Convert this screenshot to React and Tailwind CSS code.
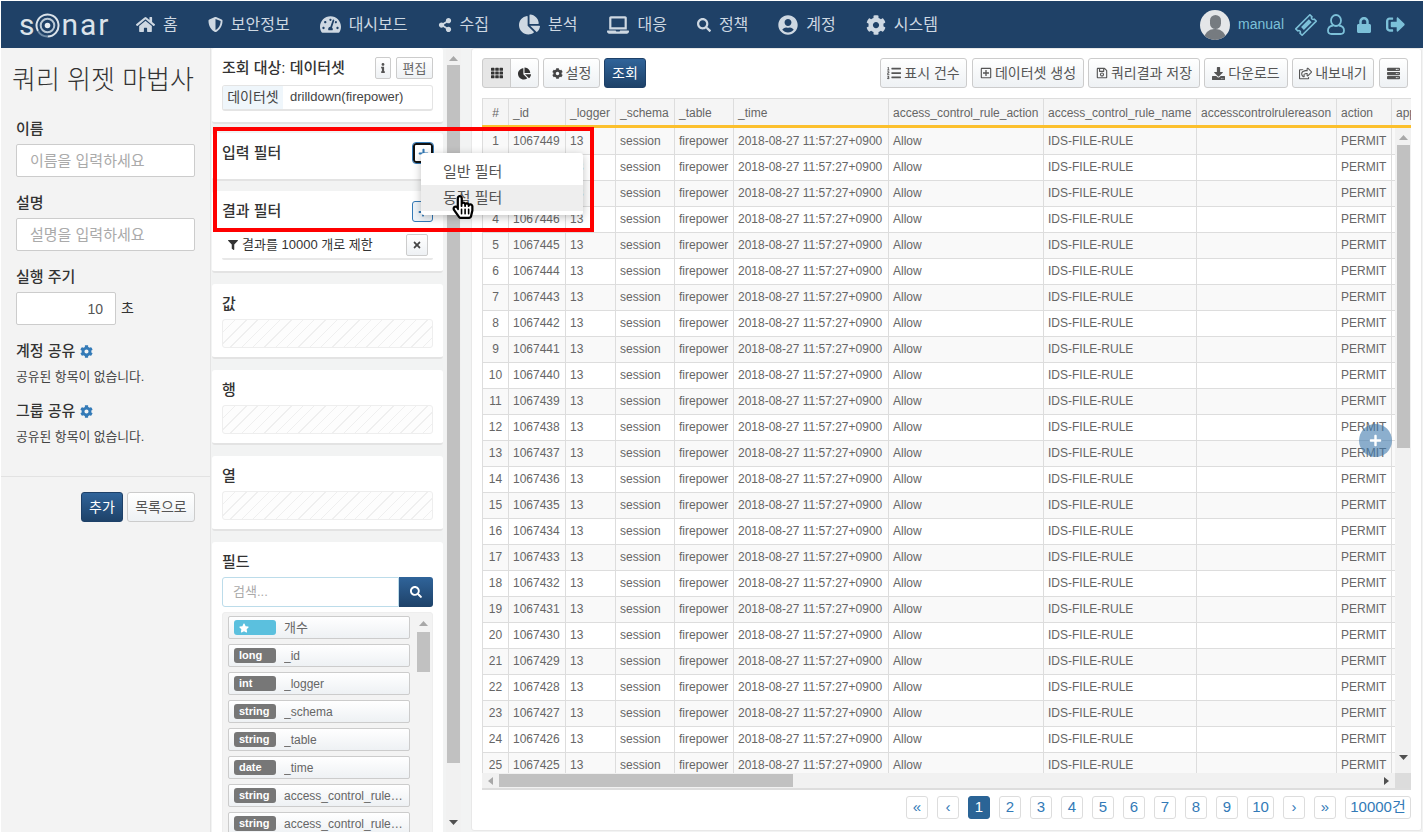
import React from "react";
import {
	FaHome, FaShieldAlt, FaTachometerAlt, FaShareAlt, FaChartPie, FaLaptop, FaSearch, FaUserCircle, FaCog,
	FaInfo, FaTimes, FaFilter, FaStar, FaTh, FaDownload, FaRegShareSquare, FaRegSave, FaRegPlusSquare,
	FaListOl, FaLock, FaSignOutAlt, FaPlus, FaServer, FaHandPointer, FaRegHandPointer,
} from "react-icons/fa";

const navItems = [
	{ label: "홈", icon: FaHome, size: 19 },
	{ label: "보안정보", icon: FaShieldAlt, size: 15 },
	{ label: "대시보드", icon: FaTachometerAlt, size: 21 },
	{ label: "수집", icon: FaShareAlt, size: 14 },
	{ label: "분석", icon: FaChartPie, size: 21 },
	{ label: "대응", icon: FaLaptop, size: 22 },
	{ label: "정책", icon: FaSearch, size: 14 },
	{ label: "계정", icon: FaUserCircle, size: 20 },
	{ label: "시스템", icon: FaCog, size: 20 },
];

const fields = [
	["long", "_id"],
	["int", "_logger"],
	["string", "_schema"],
	["string", "_table"],
	["date", "_time"],
	["string", "access_control_rule_action"],
	["string", "access_control_rule_name"],
];

const columns = ["#", "_id", "_logger", "_schema", "_table", "_time", "access_control_rule_action", "access_control_rule_name", "accesscontrolrulereason", "action", "app"];

const rows = Array.from({ length: 25 }, (_, i) => i + 1);

const Cols = () => (
	<colgroup>
		<col className="w-[26px]" />
		<col className="w-[57px]" />
		<col className="w-[50px]" />
		<col className="w-[59px]" />
		<col className="w-[59px]" />
		<col className="w-[155px]" />
		<col className="w-[155px]" />
		<col className="w-[153px]" />
		<col className="w-[140px]" />
		<col className="w-[55px]" />
		<col className="w-[80px]" />
	</colgroup>
);

const Btn = ({ children, className = "" }) => (
	<button className={"flex h-[30px] items-center justify-center gap-[3px] rounded-[3px] border border-[#ccc] bg-gradient-to-b from-white to-[#eef1f4] text-[14px] text-[#555] " + className}>
		{children}
	</button>
);

const Primary = ({ children, className = "" }) => (
	<button className={"flex h-[30px] items-center justify-center rounded-[3px] border border-[#1d4068] bg-gradient-to-b from-[#30649a] to-[#1e4269] text-[14px] text-white " + className}>
		{children}
	</button>
);

const Card = ({ children, className = "" }) => (
	<div className={"w-[231px] shrink-0 rounded-[3px] border-b-2 border-[#e3e3e3] bg-white px-[10px] " + className}>{children}</div>
);

const DropZone = ({ title }) => (
	<Card className="mb-[11px] h-[75px] pt-[10px]">
		<div className="text-[15px] leading-[20px] font-medium text-[#333]">{title}</div>
		<div className="mt-[5px] h-[29px] rounded-[3px] border border-[#eee] bg-[repeating-linear-gradient(135deg,#efefef_0,#efefef_1px,#fdfdfd_1px,#fdfdfd_8px)]" />
	</Card>
);

const Up = () => (
	<svg width="9" height="5" viewBox="0 0 9 5"><polygon points="4.5,0 9,5 0,5" fill="#a8a8a8" /></svg>
);
const Down = () => (
	<svg width="9" height="5" viewBox="0 0 9 5"><polygon points="0,0 9,0 4.5,5" fill="#505050" /></svg>
);

const PageBtn = ({ children, active, className = "w-[22px]" }) => (
	<button className={"flex h-[23px] items-center justify-center rounded-[3px] border text-[15px] " + (active ? "border-[#2a6496] bg-[#2a6496] text-white " : "border-[#ddd] bg-white text-[#337ab7] ") + className}>
		{children}
	</button>
);

const Field = ({ badge, name, star }) => (
	<div className="mb-[5px] flex h-[23px] w-[182px] shrink-0 items-center rounded-[2px] border border-[#ccc] bg-gradient-to-b from-white to-[#eef1f4] pl-[5px]">
		<span className={"flex h-[15px] w-[42px] shrink-0 items-center rounded-[3px] pl-[5px] text-[11px] font-bold text-white " + (star ? "bg-[#5bc0de]" : "bg-[#777]")}>
			{star ? <FaStar size={10} /> : badge}
		</span>
		<span className={"ml-[8px] truncate pr-[6px] text-[#666] " + (star ? "text-[13px]" : "text-[12px]")}>{name}</span>
	</div>
);

const App = () => {
	return (
		<div className="relative flex h-[832px] w-[1423px] flex-col overflow-hidden border-t border-l border-white bg-[#f2f3f3] font-['Liberation_Sans','Noto_Sans_CJK_KR',sans-serif]">
			{/* top bar */}
			<div className="flex h-[47px] shrink-0 items-center bg-[#1f4167] pr-[18px] pl-[16px]">
				<div className="flex w-[119px] items-center pl-[2px] font-['Roboto',sans-serif] text-[30px] leading-none font-normal tracking-[2px] text-[#dbe3ea]">
					<span className="tracking-normal">s</span>
					<svg width="25" height="25" viewBox="0 0 25 25" className="mt-[1px] mr-[1px] ml-[1px]">
						<path d="M3 18 A11 11 0 1 1 12.5 23.5" fill="none" stroke="#dbe3ea" strokeWidth="2" />
						<path d="M3 18 A11 11 0 0 0 12.5 23.5" fill="none" stroke="#6f8ba6" strokeWidth="2" />
						<circle cx="12.5" cy="12.5" r="6.8" fill="none" stroke="#b9c8d5" strokeWidth="2" />
						<circle cx="12.5" cy="12.5" r="2.8" fill="#e6edf2" />
					</svg>
					<span>nar</span>
				</div>
				<div className="flex items-center gap-[30px] text-[#ced8e2]">
					{navItems.map((n) => (
						<div key={n.label} className="flex items-center gap-[8px] text-[16px] leading-none">
							<n.icon size={n.size} />
							<span>{n.label}</span>
						</div>
					))}
				</div>
				<div className="ml-auto flex items-center text-[#7cc0d8]">
					<div className="relative flex h-[30px] w-[30px] items-center justify-center overflow-hidden rounded-full bg-[#e4e6e8]">
						<div className="absolute top-[5px] h-[14px] w-[11px] rounded-full bg-[#767b80]" />
						<div className="absolute top-[19px] h-[16px] w-[22px] rounded-t-[10px] bg-[#767b80]" />
					</div>
					<span className="ml-[8px] text-[14px]">manual</span>
					<svg width="22" height="22" viewBox="0 0 22 22" className="ml-[11px]">
						<g transform="rotate(-45 11 11)">
							<path d="M1 6.5 H21 V9.5 A1.5 1.5 0 0 0 21 12.5 V15.5 H1 V12.5 A1.5 1.5 0 0 0 1 9.5 Z" fill="none" stroke="currentColor" strokeWidth="1.6" strokeLinejoin="round" />
							<rect x="6" y="9" width="11" height="4" fill="currentColor" />
						</g>
					</svg>
					<svg width="18" height="21" viewBox="0 0 18 21" className="ml-[10px]" fill="none" stroke="currentColor" strokeWidth="1.8">
						<ellipse cx="9" cy="6.5" rx="5" ry="5.5" />
						<path d="M6 11.5 C2.5 12 1 14 1 16.5 C1 19 2.5 20 4.5 20 L13.5 20 C15.5 20 17 19 17 16.5 C17 14 15.5 12 12 11.5" />
					</svg>
					<FaLock size={16} className="ml-[11px]" />
					<FaSignOutAlt size={19} className="ml-[14px]" />
				</div>
			</div>

			<div className="flex min-h-0 flex-1">
				{/* left form */}
				<div className="flex w-[210px] shrink-0 flex-col border-r border-[#e4e4e4] bg-[#f3f3f3]">
					<div className="pt-[17px] pl-[11px] text-[26px] leading-[30px] font-light text-[#333]">쿼리 위젯 마법사</div>
					<div className="border-b border-[#e2e2e2] pr-[15px] pb-[30px] pl-[15px]">
						<div className="mt-[24px] text-[15px] leading-[20px] font-medium text-[#333]">이름</div>
						<input placeholder="이름을 입력하세요" className="mt-[5px] h-[33px] w-full rounded-[2px] border border-[#ccc] bg-white px-[13px] text-[15px] placeholder:text-[#aaa]" />
						<div className="mt-[16px] text-[15px] leading-[20px] font-medium text-[#333]">설명</div>
						<input placeholder="설명을 입력하세요" className="mt-[5px] h-[33px] w-full rounded-[2px] border border-[#ccc] bg-white px-[13px] text-[15px] placeholder:text-[#aaa]" />
						<div className="mt-[16px] text-[15px] leading-[20px] font-medium text-[#333]">실행 주기</div>
						<div className="mt-[5px] flex items-center">
							<input readOnly value="10" className="h-[33px] w-[100px] rounded-[2px] border border-[#ccc] bg-white px-[12px] text-right text-[14px] text-[#555]" />
							<span className="ml-[5px] text-[14px] text-[#333]">초</span>
						</div>
						<div className="mt-[16px] flex items-center gap-[5px] text-[15px] leading-[20px] font-medium text-[#333]">
							계정 공유 <FaCog size={13} className="text-[#337ab7]" />
						</div>
						<div className="mt-[7px] text-[12.8px] leading-[18px] text-[#444]">공유된 항목이 없습니다.</div>
						<div className="mt-[15px] flex items-center gap-[5px] text-[15px] leading-[20px] font-medium text-[#333]">
							그룹 공유 <FaCog size={13} className="text-[#337ab7]" />
						</div>
						<div className="mt-[7px] text-[12.8px] leading-[18px] text-[#444]">공유된 항목이 없습니다.</div>
					</div>
					<div className="flex justify-end gap-[4px] pt-[15px] pr-[15px]">
						<Primary className="w-[42px]">추가</Primary>
						<Btn className="w-[68px]">목록으로</Btn>
					</div>
				</div>

				{/* query config */}
				<div className="flex w-[250px] shrink-0">
					<div className="ml-[1px] flex w-[233px] flex-col overflow-hidden">
						<Card className="mb-[9px] h-[76px] pt-[9px]">
							<div className="flex items-center">
								<span className="text-[15px] font-medium text-[#333]">조회 대상: 데이터셋</span>
								<button className="ml-auto flex h-[22px] w-[16px] items-center justify-center rounded-[2px] border border-[#ccc] bg-gradient-to-b from-white to-[#eef1f4] text-[#555]"><FaInfo size={10} /></button>
								<button className="ml-[5px] flex h-[22px] w-[37px] items-center justify-center rounded-[2px] border border-[#ccc] bg-gradient-to-b from-white to-[#eef1f4] text-[13px] text-[#666]">편집</button>
							</div>
							<div className="mt-[5px] flex h-[26px] items-center overflow-hidden rounded-[3px] border border-b-2 border-[#e4e4e4] text-[13px] text-[#444]">
								<span className="flex h-full w-[60px] items-center justify-center bg-[#eff6fb] text-[14px]">데이터셋</span>
								<span className="ml-[7px]">drilldown(firepower)</span>
							</div>
						</Card>
						<Card className="mb-[10px] h-[48px] pt-[10px]">
							<div className="flex items-start justify-between">
								<span className="text-[15px] leading-[20px] font-medium text-[#333]">입력 필터</span>
								<button className="flex h-[20px] w-[20px] items-center justify-center rounded-[3px] border-2 border-[#111] text-[#337ab7] outline outline-[#337ab7]"><FaPlus size={11} /></button>
							</div>
						</Card>
						<Card className="mb-[11px] h-[82px] pt-[10px]">
							<div className="flex items-start justify-between">
								<span className="text-[15px] leading-[20px] font-medium text-[#333]">결과 필터</span>
								<button className="flex h-[21px] w-[21px] items-center justify-center rounded-[3px] border border-[#337ab7] bg-[#eef4f9] text-[#337ab7]"><FaPlus size={10} /></button>
							</div>
							<div className="mt-[9px] flex h-[29px] items-center rounded-[2px] border-b-2 border-[#e8e8e8] pr-[5px] pl-[6px] text-[13px] text-[#333]">
								<FaFilter size={10} />
								<span className="ml-[4px]">결과를 10000 개로 제한</span>
								<button className="ml-auto flex h-[22px] w-[22px] items-center justify-center rounded-[2px] border border-[#ccc] bg-gradient-to-b from-white to-[#eef1f4] text-[#444]"><FaTimes size={10} /></button>
							</div>
						</Card>
						<DropZone title="값" />
						<DropZone title="행" />
						<DropZone title="열" />
						<Card className="flex-1 pt-[10px]">
							<div className="text-[15px] leading-[20px] font-medium text-[#333]">필드</div>
							<div className="mt-[5px] flex h-[30px]">
								<input placeholder="검색..." className="min-w-0 flex-1 rounded-l-[3px] border border-[#bcdcea] bg-white px-[10px] text-[13px] placeholder:text-[#aaa]" />
								<button className="flex w-[34px] items-center justify-center rounded-r-[3px] bg-gradient-to-b from-[#30649a] to-[#1e4269] text-white"><FaSearch size={12} /></button>
							</div>
							<div className="mt-[5px] flex rounded-[3px] border border-[#eee] bg-[#f3f3f3] pt-[3px] pl-[5px]">
								<div className="flex w-[183px] flex-col">
									<Field star name="개수" />
									{fields.map(([b, n]) => <Field key={n} badge={b} name={n} />)}
								</div>
								<div className="ml-[6px] flex w-[13px] flex-col items-center">
									<div className="mt-[5px] flex h-[11px] items-start"><Up /></div>
									<div className="h-[40px] w-full bg-[#c1c1c1]" />
								</div>
							</div>
						</Card>
					</div>
					<div className="ml-[1px] flex w-[15px] shrink-0 flex-col items-center bg-[#f1f1f1]">
						<div className="flex h-[17px] items-center pt-[3px]"><Up /></div>
						<div className="h-[698px] w-[13px] bg-[#c1c1c1]" />
						<div className="mt-auto flex h-[19px] items-center"><Down /></div>
					</div>
				</div>

				{/* result panel */}
				<div className="mb-[1px] ml-[10px] flex w-[951px] shrink-0 flex-col rounded-[3px] border border-[#e8e8e8] bg-white px-[10px] pt-[9px]">
					<div className="flex h-[30px] items-center">
						<div className="flex">
							<button className="flex h-[30px] w-[29px] items-center justify-center rounded-l-[3px] border border-[#ccc] bg-[#e6e6e6] text-[#333]"><FaTh size={12} /></button>
							<button className="-ml-px flex h-[30px] w-[29px] items-center justify-center rounded-r-[3px] border border-[#ccc] bg-gradient-to-b from-white to-[#eef1f4] text-[#333]"><FaChartPie size={13} /></button>
						</div>
						<Btn className="ml-[4px] w-[57px]"><FaCog size={11} className="text-[#444]" />설정</Btn>
						<Primary className="ml-[4px] w-[42px]">조회</Primary>
						<div className="ml-auto flex gap-[4px] pr-[3px]">
							<Btn className="mr-[1px] w-[87px]"><FaListOl size={14} />표시 건수</Btn>
							<Btn className="w-[112px]"><FaRegPlusSquare size={12} />데이터셋 생성</Btn>
							<Btn className="w-[112px]"><FaRegSave size={12} />쿼리결과 저장</Btn>
							<Btn className="w-[84px]"><FaDownload size={13} />다운로드</Btn>
							<Btn className="mr-[1px] w-[82px]"><FaRegShareSquare size={13} />내보내기</Btn>
							<Btn className="w-[29px]"><FaServer size={13} /></Btn>
						</div>
					</div>

					{/* table */}
					<div className="mt-[10px] h-[30px] w-[929px] shrink-0 overflow-hidden">
						<table className="w-[989px] table-fixed border-collapse text-[12px] text-[#666]">
							<Cols />
							<thead>
								<tr className="h-[28px]">
									{columns.map((c, i) => (
										<th key={c} className={"overflow-hidden border border-b-[3px] border-[#ddd] border-b-[#fcc02d] bg-[#f5f5f5] px-[4px] pt-[2px] font-normal whitespace-nowrap " + (i === 0 ? "text-center" : "text-left")}>{c}</th>
									))}
								</tr>
							</thead>
						</table>
					</div>
					<div className="flex h-[645px] w-[929px] shrink-0 overflow-hidden">
						<div className="w-[913px] shrink-0 overflow-hidden">
							<table className="w-[989px] table-fixed border-collapse text-[12px] text-[#666]">
								<Cols />
								<tbody>
									{rows.map((r) => (
										<tr key={r} className={"h-[26px] " + (r % 2 ? "bg-[#f9f9f9]" : "bg-white")}>
											<td className="border border-t-0 border-[#ddd] text-center">{r}</td>
											<td className="border border-t-0 border-[#ddd] px-[4px]">{1067450 - r}</td>
											<td className="border border-t-0 border-[#ddd] px-[4px]">13</td>
											<td className="border border-t-0 border-[#ddd] px-[4px]">session</td>
											<td className="border border-t-0 border-[#ddd] px-[4px]">firepower</td>
											<td className="border border-t-0 border-[#ddd] px-[4px] whitespace-nowrap">2018-08-27 11:57:27+0900</td>
											<td className="border border-t-0 border-[#ddd] px-[4px]">Allow</td>
											<td className="border border-t-0 border-[#ddd] px-[4px]">IDS-FILE-RULE</td>
											<td className="border border-t-0 border-[#ddd] px-[4px]"></td>
											<td className="border border-t-0 border-[#ddd] px-[4px]">PERMIT</td>
											<td className="border border-t-0 border-[#ddd]"></td>
										</tr>
									))}
								</tbody>
							</table>
						</div>
						<div className="flex w-[16px] shrink-0 flex-col items-center bg-[#f1f1f1]">
							<div className="flex h-[17px] items-center pt-[2px]"><Up /></div>
							<div className="h-[303px] w-[13px] bg-[#c1c1c1]" />
							<div className="mt-auto flex h-[18px] items-start"><Down /></div>
						</div>
					</div>
					<div className="flex h-[17px] w-[929px] shrink-0 border-b-2 border-[#ddd] bg-[#f1f1f1]">
						<div className="flex w-[913px] items-center">
							<div className="flex w-[17px] justify-center"><div className="h-0 w-0 border-y-[4px] border-r-[5px] border-y-transparent border-r-[#a8a8a8]" /></div>
							<div className="h-[13px] w-[294px] bg-[#c1c1c1]" />
							<div className="mt-0 ml-auto flex w-[17px] justify-center"><div className="h-0 w-0 border-y-[4px] border-l-[5px] border-y-transparent border-l-[#505050]" /></div>
						</div>
						<div className="flex-1 bg-[#dcdcdc]" />
					</div>

					<div className="mt-[6px] flex w-[929px] justify-end gap-[9px]">
						<PageBtn>«</PageBtn>
						<PageBtn>‹</PageBtn>
						<PageBtn active>1</PageBtn>
						<PageBtn>2</PageBtn>
						<PageBtn>3</PageBtn>
						<PageBtn>4</PageBtn>
						<PageBtn>5</PageBtn>
						<PageBtn>6</PageBtn>
						<PageBtn>7</PageBtn>
						<PageBtn>8</PageBtn>
						<PageBtn>9</PageBtn>
						<PageBtn className="w-[27px]">10</PageBtn>
						<PageBtn>›</PageBtn>
						<PageBtn>»</PageBtn>
						<PageBtn className="w-[66px]">10000건</PageBtn>
					</div>
				</div>
			</div>

			{/* add-field button */}
			<div className="absolute top-[423px] left-[1358px] flex h-[33px] w-[33px] items-center justify-center rounded-full bg-[#3f79ad]/60 text-white">
				<FaPlus size={13} />
			</div>

			{/* filter dropdown */}
			<div className="absolute top-[152px] left-[420px] w-[162px] rounded-[3px] bg-white pt-[6px] pb-[4px] text-[15px] text-[#555] shadow-[0_2px_8px_rgba(0,0,0,0.25)]">
				<div className="flex h-[26px] items-center pl-[22px]">일반 필터</div>
				<div className="flex h-[26px] items-center bg-[#eeeeee] pl-[22px]">동적 필터</div>
			</div>

			{/* annotation box */}
			<div className="absolute top-[126px] left-[212px] h-[105px] w-[381px] border-4 border-[#ff0000]" />

			{/* mouse cursor */}
			<div className="absolute top-[194px] left-[450px] h-[24px] w-[21px]">
				<FaHandPointer size={24} className="absolute top-0 left-0 text-white" />
				<FaRegHandPointer size={24} className="absolute top-0 left-0 text-black" />
			</div>
		</div>
	);
};

export default App;
